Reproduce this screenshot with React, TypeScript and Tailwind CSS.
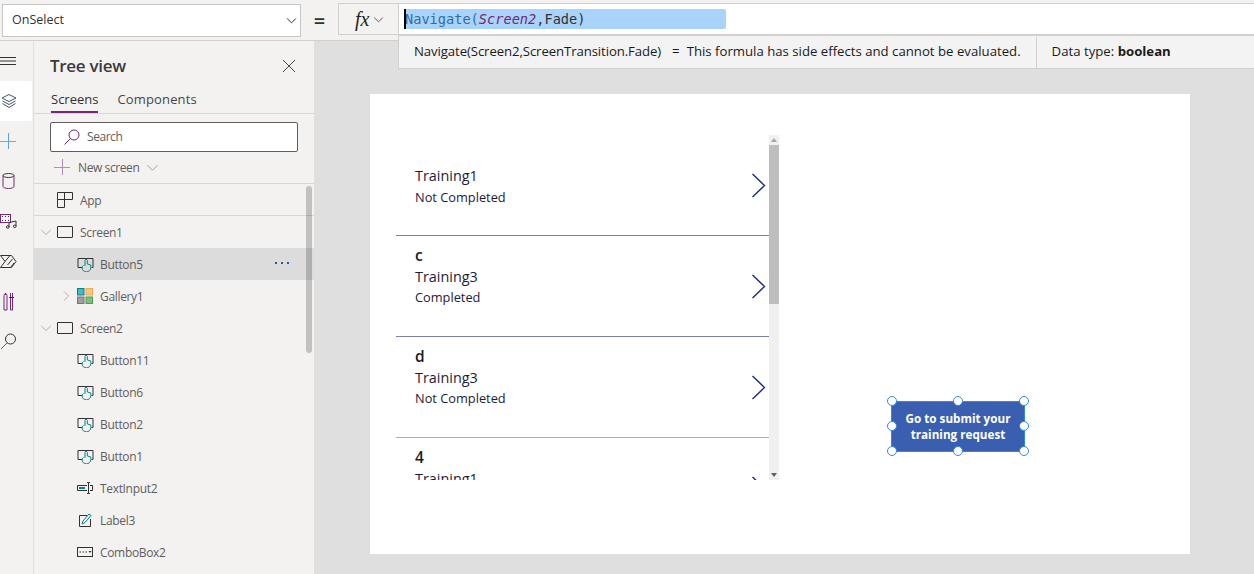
import React from "react";

const ui = "font-['Open_Sans','Noto_Sans',sans-serif]";

function Chevron({ dir = "down", className = "", size = 14 }: { dir?: "down" | "right"; className?: string; size?: number }) {
  return (
    <svg width={size} height={size} viewBox="0 0 14 14" fill="none" stroke="currentColor" strokeWidth={14 / size} className={className}>
      {dir === "down" ? <path d="M1.500 4.500 7 10 12.500 4.500" /> : <path d="M4.500 1.500 10 7 4.500 12.500" />}
    </svg>
  );
}

function ButtonIcon() {
  return (
    <svg width="17" height="15" viewBox="0 0 17 15" fill="none">
      <path d="M5.500 10.500H1V1.500h15v9h-1.500" stroke="#323130" />
      <path d="M8 9V3.500a1.150 1.150 0 0 1 2.300 0V7l3.500 1v2.500a4.400 4.400 0 0 1-8.800 0c0-1 .8-1.700 1.500-2" stroke="#038387" />
    </svg>
  );
}

function ScreenIcon() {
  return (
    <svg width="16" height="12" viewBox="0 0 16 12" fill="none">
      <rect x=".5" y=".5" width="15" height="11" stroke="#323130" rx=".5" />
    </svg>
  );
}

function AppIcon() {
  return (
    <svg width="16" height="16" viewBox="0 0 16 16" fill="none" stroke="#323130">
      <path d="M.5.500h15v7H.5zM.5 7.500h7v8h-7zM7.500.500v7" />
    </svg>
  );
}

function GalleryIcon() {
  return (
    <svg width="16" height="16" viewBox="0 0 16 16">
      <rect x=".5" y=".5" width="6.500" height="6.500" fill="#4fb9bf" stroke="#038387" />
      <rect x="9" y=".5" width="6.500" height="6.500" fill="#fcc77e" stroke="#f0ab54" />
      <rect x=".5" y="9" width="6.500" height="6.500" fill="#a19f9d" stroke="#797775" />
      <rect x="9" y="9" width="6.500" height="6.500" fill="#7fc07f" stroke="#4f9f4f" />
    </svg>
  );
}

function TextInputIcon() {
  return (
    <svg width="16" height="12" viewBox="0 0 16 12" fill="none">
      <path d="M10 3.500H.5v5H10M13 3.500h2.500v5H13" stroke="#323130" />
      <rect x="2" y="5" width="6" height="2" fill="#038387" />
      <path d="M10 .5h1.500v11H10M13 .5h-1.500M13 11.500h-1.500" stroke="#323130" />
    </svg>
  );
}

function LabelIcon() {
  return (
    <svg width="14" height="14" viewBox="0 0 14 14" fill="none" className="ml-[2px]">
      <path d="M8 2.500H.5v11h11V6" stroke="#323130" />
      <path d="M3 11l1-3 6-7 2 1.500-6 7z" stroke="#038387" fill="#f3f2f1" />
    </svg>
  );
}

function ComboIcon() {
  return (
    <svg width="16" height="10" viewBox="0 0 16 10" fill="none">
      <rect x=".5" y=".5" width="15" height="9" stroke="#323130" />
      <path d="M2.500 5h1.500M5.500 5H7M8.500 5H10" stroke="#323130" />
      <path d="M11.500 4h3l-1.500 2z" fill="#323130" />
    </svg>
  );
}

function TreeRow({ icon, label, depth = 1, chevron, selected = false, border = false }: {
  icon: React.ReactNode; label: string; depth?: 0 | 1; chevron?: "down" | "right"; selected?: boolean; border?: boolean;
}) {
  return (
    <div className={`relative flex items-center h-8 shrink-0 ${selected ? "bg-[#dcdcdc]" : ""} ${border ? "border-b border-[#d8d6d4]" : ""}`}>
      <div className={`flex items-center justify-center shrink-0 text-[#b3b0ad] ${depth === 0 ? "w-[23px] ml-0" : "w-[23px] ml-5"}`}>
        {chevron && <Chevron dir={chevron} size={12} />}
      </div>
      <div className="flex items-center w-[23px] shrink-0">{icon}</div>
      <span className="pt-[2px] text-[12px] tracking-[-0.33px] text-[#605e5c]">{label}</span>
      {selected && (
        <div className="absolute left-[241px] top-[14px] flex gap-[4px]">
          <i className="block w-[2px] h-[2px] bg-[#2b5797]" />
          <i className="block w-[2px] h-[2px] bg-[#2b5797]" />
          <i className="block w-[2px] h-[2px] bg-[#2b5797]" />
        </div>
      )}
    </div>
  );
}

function RailItem({ children, active = false }: { children: React.ReactNode; active?: boolean }) {
  return (
    <div className={`h-10 w-8 flex items-center ${active ? "bg-white rounded-r-[2px]" : ""}`}>
      <div className="w-[17px] flex justify-center">{children}</div>
    </div>
  );
}

function GalleryItem({ title, sub, status, line = "border-[#7d80ae]" }: { title?: string; sub: string; status?: string; line?: string }) {
  return (
    <div className={`relative h-[101px] shrink-0 pl-[19px] border-b ${line} ${title ? "pt-[8px]" : "pt-[30px]"}`}>
      {title && <div className="text-[15.500px] leading-[22px] font-semibold text-[#1a1a1a]">{title}</div>}
      <div className="text-[14.400px] leading-[21px] text-[#1b1b3a]">{sub}</div>
      {status && <div className={`text-[12.800px] leading-[20px] ${title ? "" : "mt-[1px]"} text-[#1b1b3a]`}>{status}</div>}
      <svg width="15" height="25" viewBox="0 0 15 25" fill="none" stroke="#1d2a7a" strokeWidth="1.400" className="absolute left-[355px] top-[38px]">
        <path d="M1.500 1 13.500 12.500 1.500 24" />
      </svg>
    </div>
  );
}

function Handle({ className }: { className: string }) {
  return <div className={`absolute w-[10px] h-[10px] rounded-full bg-white border border-[#2f8bd6] ${className}`} />;
}

export default function App() {
  return (
    <div className={`relative w-[1254px] h-[574px] overflow-hidden bg-[#dfdfdf] flex flex-col ${ui}`}>
      <div className="h-[41px] shrink-0 bg-[#f3f2f1] border-b border-[#d2d0ce] flex items-start pt-[3px] pl-[2px]">
        <div className="w-[299px] h-[33px] mt-[1px] bg-white border border-[#c8c6c4] flex items-center justify-between pl-[9px] pr-[3px]">
          <span className="text-[12.500px] text-[#323130]">OnSelect</span>
          <Chevron size={11} className="text-[#323130]" />
        </div>
        <div className="w-[37px] h-[33px] flex items-center justify-center text-[20px] font-semibold text-[#323130] mt-[1px]">=</div>
        <div className="w-[60px] h-[32px] border border-[#d2d0ce] border-r-0 bg-[#f3f2f1] pl-[16px] flex items-center gap-[4px] text-[#201f1e]">
          <span className="font-['Liberation_Serif',serif] italic text-[20px] leading-none">fx</span>
          <Chevron size={11} className="text-[#605e5c]" />
        </div>
        <div className="flex-1 h-[32px] bg-white border border-[#d2d0ce] border-r-0 flex items-center pl-[5px]">
          <div className="relative w-[322px] h-[20px] pl-[1px] bg-[#a9d3fb] rounded-[2px] flex items-center font-['DejaVu_Sans_Mono',monospace] text-[13.640px] text-[#323130] whitespace-pre">
            <i className="absolute left-0 top-0 w-[2px] h-[20px] bg-black" />
            <span className="text-[#2f6ea5]">Navigate(</span>
            <span className="italic text-[#742774]">Screen2</span>
            <span>,Fade)</span>
          </div>
        </div>
      </div>

      <div className="absolute left-[398px] top-[35px] right-0 h-[34px] bg-[#f3f3f3] border border-[#d2d0ce] border-r-0 flex items-center text-[13.200px] text-[#1b1a19]">
        <span className="pl-[15px] tracking-[-0.1px] whitespace-pre">Navigate(Screen2,ScreenTransition.Fade)</span>
        <span className="ml-[11px]">=</span>
        <span className="ml-[7px] whitespace-pre">This formula has side effects and cannot be evaluated.</span>
        <div className="ml-[15px] w-px h-[31px] bg-[#d2d0ce]" />
        <span className="pl-[15px]">Data type: <b className="font-bold">boolean</b></span>
      </div>

      <div className="flex-1 flex min-h-0">
        <div className="w-[34px] shrink-0 bg-[#f3f2f1] border-r border-[#e1dfdd] flex flex-col">
          <RailItem>
            <svg width="17" height="10" viewBox="0 0 17 10" stroke="#323130"><path d="M0 1.500h16M0 5h16M0 8.500h16" /></svg>
          </RailItem>
          <RailItem active>
            <svg width="16" height="16" viewBox="0 0 16 16" fill="none" stroke="#44546a">
              <path d="M8 1.500 15 5 8 8.500 1 5zM1.500 8 8 11.500 14.500 8M1.500 10.500 8 14.500 14.500 10.500" />
            </svg>
          </RailItem>
          <RailItem>
            <svg width="17" height="17" viewBox="0 0 17 17" fill="none"><path d="M0 8.500h16" stroke="#a19f9d" /><path d="M8.500 0v16" stroke="#5ba3d9" /></svg>
          </RailItem>
          <RailItem>
            <svg width="13" height="16" viewBox="0 0 13 16" fill="none"><ellipse cx="6.500" cy="2.500" rx="5.500" ry="2" stroke="#323130" /><path d="M1 2.500v11c0 1 2.500 2 5.500 2s5.500-1 5.500-2v-11" stroke="#742774" /></svg>
          </RailItem>
          <RailItem>
            <svg width="17" height="16" viewBox="0 0 17 16" fill="none">
              <rect x=".5" y="1.500" width="10" height="8" stroke="#742774" />
              <path d="M2 3.500h1M2 7.500h1M5 3.500h1M5 7.500h1M8 3.500h1M8 7.500h1" stroke="#323130" />
              <path d="M9 14V9.500l7-1.500v5" stroke="#323130" />
              <circle cx="7.800" cy="14" r="1.300" stroke="#323130" />
              <circle cx="14.800" cy="13.300" r="1.300" stroke="#323130" />
            </svg>
          </RailItem>
          <RailItem>
            <svg width="17" height="13" viewBox="0 0 17 13" fill="none" stroke="#323130">
              <path d="M.5.500h11L16 6.500l-4.500 6H.5l4.500-6z" />
              <path d="M5 6.500 10 .5M7.500 10l5-6M10.500 12.500 14 8" />
            </svg>
          </RailItem>
          <RailItem>
            <svg width="11" height="19" viewBox="0 0 11 19" fill="none">
              <path d="M1 3.500a1.500 1.500 0 0 1 3 0V18H1z" stroke="#742774" />
              <path d="M7.500 1v17h2V1" stroke="#742774" />
              <path d="M6 5.500h5" stroke="#323130" />
              <path d="M2.500 1v2" stroke="#323130" />
            </svg>
          </RailItem>
          <RailItem>
            <svg width="17" height="17" viewBox="0 0 17 17" fill="none"><circle cx="10.500" cy="6" r="5" stroke="#323130" /><path d="M7 10 1 16" stroke="#0078d4" /></svg>
          </RailItem>
        </div>

        <div className="w-[281px] shrink-0 bg-[#f3f2f1] border-r border-[#e1dfdd] flex flex-col relative overflow-hidden">
          <div className="h-[50px] shrink-0 pl-4 pr-[18px] flex items-center justify-between">
            <span className="text-[17px] font-semibold tracking-[-0.3px] text-[#3b3a39]">Tree view</span>
            <svg width="14" height="14" viewBox="0 0 14 14" stroke="#4a4846" fill="none"><path d="M1 1l12 12M13 1 1 13" /></svg>
          </div>
          <div className="h-[22px] shrink-0 border-b border-[#d8d6d4] pl-[17px] flex items-start gap-[19px] text-[13px] text-[#484644] box-content">
            <span className="h-[22px] border-b-2 border-[#742774] box-border leading-[16px] font-medium text-[#323130]">Screens</span>
            <span className="leading-[16px] tracking-[0.15px]">Components</span>
          </div>
          <div className="mt-2 ml-4 w-[248px] h-[30px] shrink-0 bg-white border border-[#605e5c] rounded-[2px] flex items-center pl-[12px] gap-[7px]">
            <svg width="17" height="17" viewBox="0 0 17 17" fill="none"><circle cx="11" cy="6" r="5" stroke="#742774" /><path d="M7.500 9.500 1.500 15.500" stroke="#742774" /></svg>
            <span className="text-[12px] tracking-[-0.45px] text-[#605e5c]">Search</span>
          </div>
          <div className="h-8 shrink-0 border-b border-[#d8d6d4] pl-5 flex items-center gap-[7px] text-[12px] tracking-[-0.4px] text-[#605e5c]">
            <svg width="17" height="17" viewBox="0 0 17 17"><path d="M0 8.500h16M8.500 0v16" stroke="#b58cb5" /></svg>
            <span>New screen</span>
            <Chevron size={13} className="text-[#a19f9d]" />
          </div>
          <TreeRow depth={0} icon={<AppIcon />} label="App" border />
          <TreeRow depth={0} chevron="down" icon={<ScreenIcon />} label="Screen1" />
          <TreeRow icon={<ButtonIcon />} label="Button5" selected />
          <TreeRow chevron="right" icon={<GalleryIcon />} label="Gallery1" />
          <TreeRow depth={0} chevron="down" icon={<ScreenIcon />} label="Screen2" />
          <TreeRow icon={<ButtonIcon />} label="Button11" />
          <TreeRow icon={<ButtonIcon />} label="Button6" />
          <TreeRow icon={<ButtonIcon />} label="Button2" />
          <TreeRow icon={<ButtonIcon />} label="Button1" />
          <TreeRow icon={<TextInputIcon />} label="TextInput2" />
          <TreeRow icon={<LabelIcon />} label="Label3" />
          <TreeRow icon={<ComboIcon />} label="ComboBox2" />
          <div className="absolute left-[272px] top-[145px] w-[6px] h-[167px] rounded-[3px] bg-black/20" />
        </div>

        <div className="flex-1 pl-[55px] pt-[53px]">
          <div className="relative w-[820px] h-[460px] bg-white">
            <div className="absolute left-[26px] top-[41px] w-[383px] h-[345px] flex overflow-hidden">
              <div className="w-[373px] flex flex-col">
                <GalleryItem sub="Training1" status="Not Completed" />
                <GalleryItem title="c" sub="Training3" status="Completed" />
                <GalleryItem title="d" sub="Training3" status="Not Completed" line="border-[#a9abcb]" />
                <GalleryItem title="4" sub="Training1" />
              </div>
              <div className="relative w-[10px] bg-[#f0f0f0] flex flex-col justify-between items-center py-[3px]">
                <div className="w-0 h-0 border-x-[3px] border-x-transparent border-b-[4px] border-b-[#a6a6a6]" />
                <div className="absolute left-0 top-[10px] w-[10px] h-[159px] bg-[#bebebe]" />
                <div className="w-0 h-0 border-x-[3px] border-x-transparent border-t-[4px] border-t-[#606060]" />
              </div>
            </div>
            <div className="absolute left-[521px] top-[307px] w-[134px] h-[51px] pb-[2px] bg-[#3a5fb0] border border-[#2f8bd6] flex items-center justify-center text-center text-[11.700px] leading-[16px] font-bold text-white">
              <span>Go to submit your<br />training request</span>
            </div>
            <Handle className="left-[517px] top-[302px]" />
            <Handle className="left-[583px] top-[302px]" />
            <Handle className="left-[649px] top-[302px]" />
            <Handle className="left-[517px] top-[327px]" />
            <Handle className="left-[649px] top-[327px]" />
            <Handle className="left-[517px] top-[352px]" />
            <Handle className="left-[583px] top-[352px]" />
            <Handle className="left-[649px] top-[352px]" />
          </div>
        </div>
      </div>
    </div>
  );
}
